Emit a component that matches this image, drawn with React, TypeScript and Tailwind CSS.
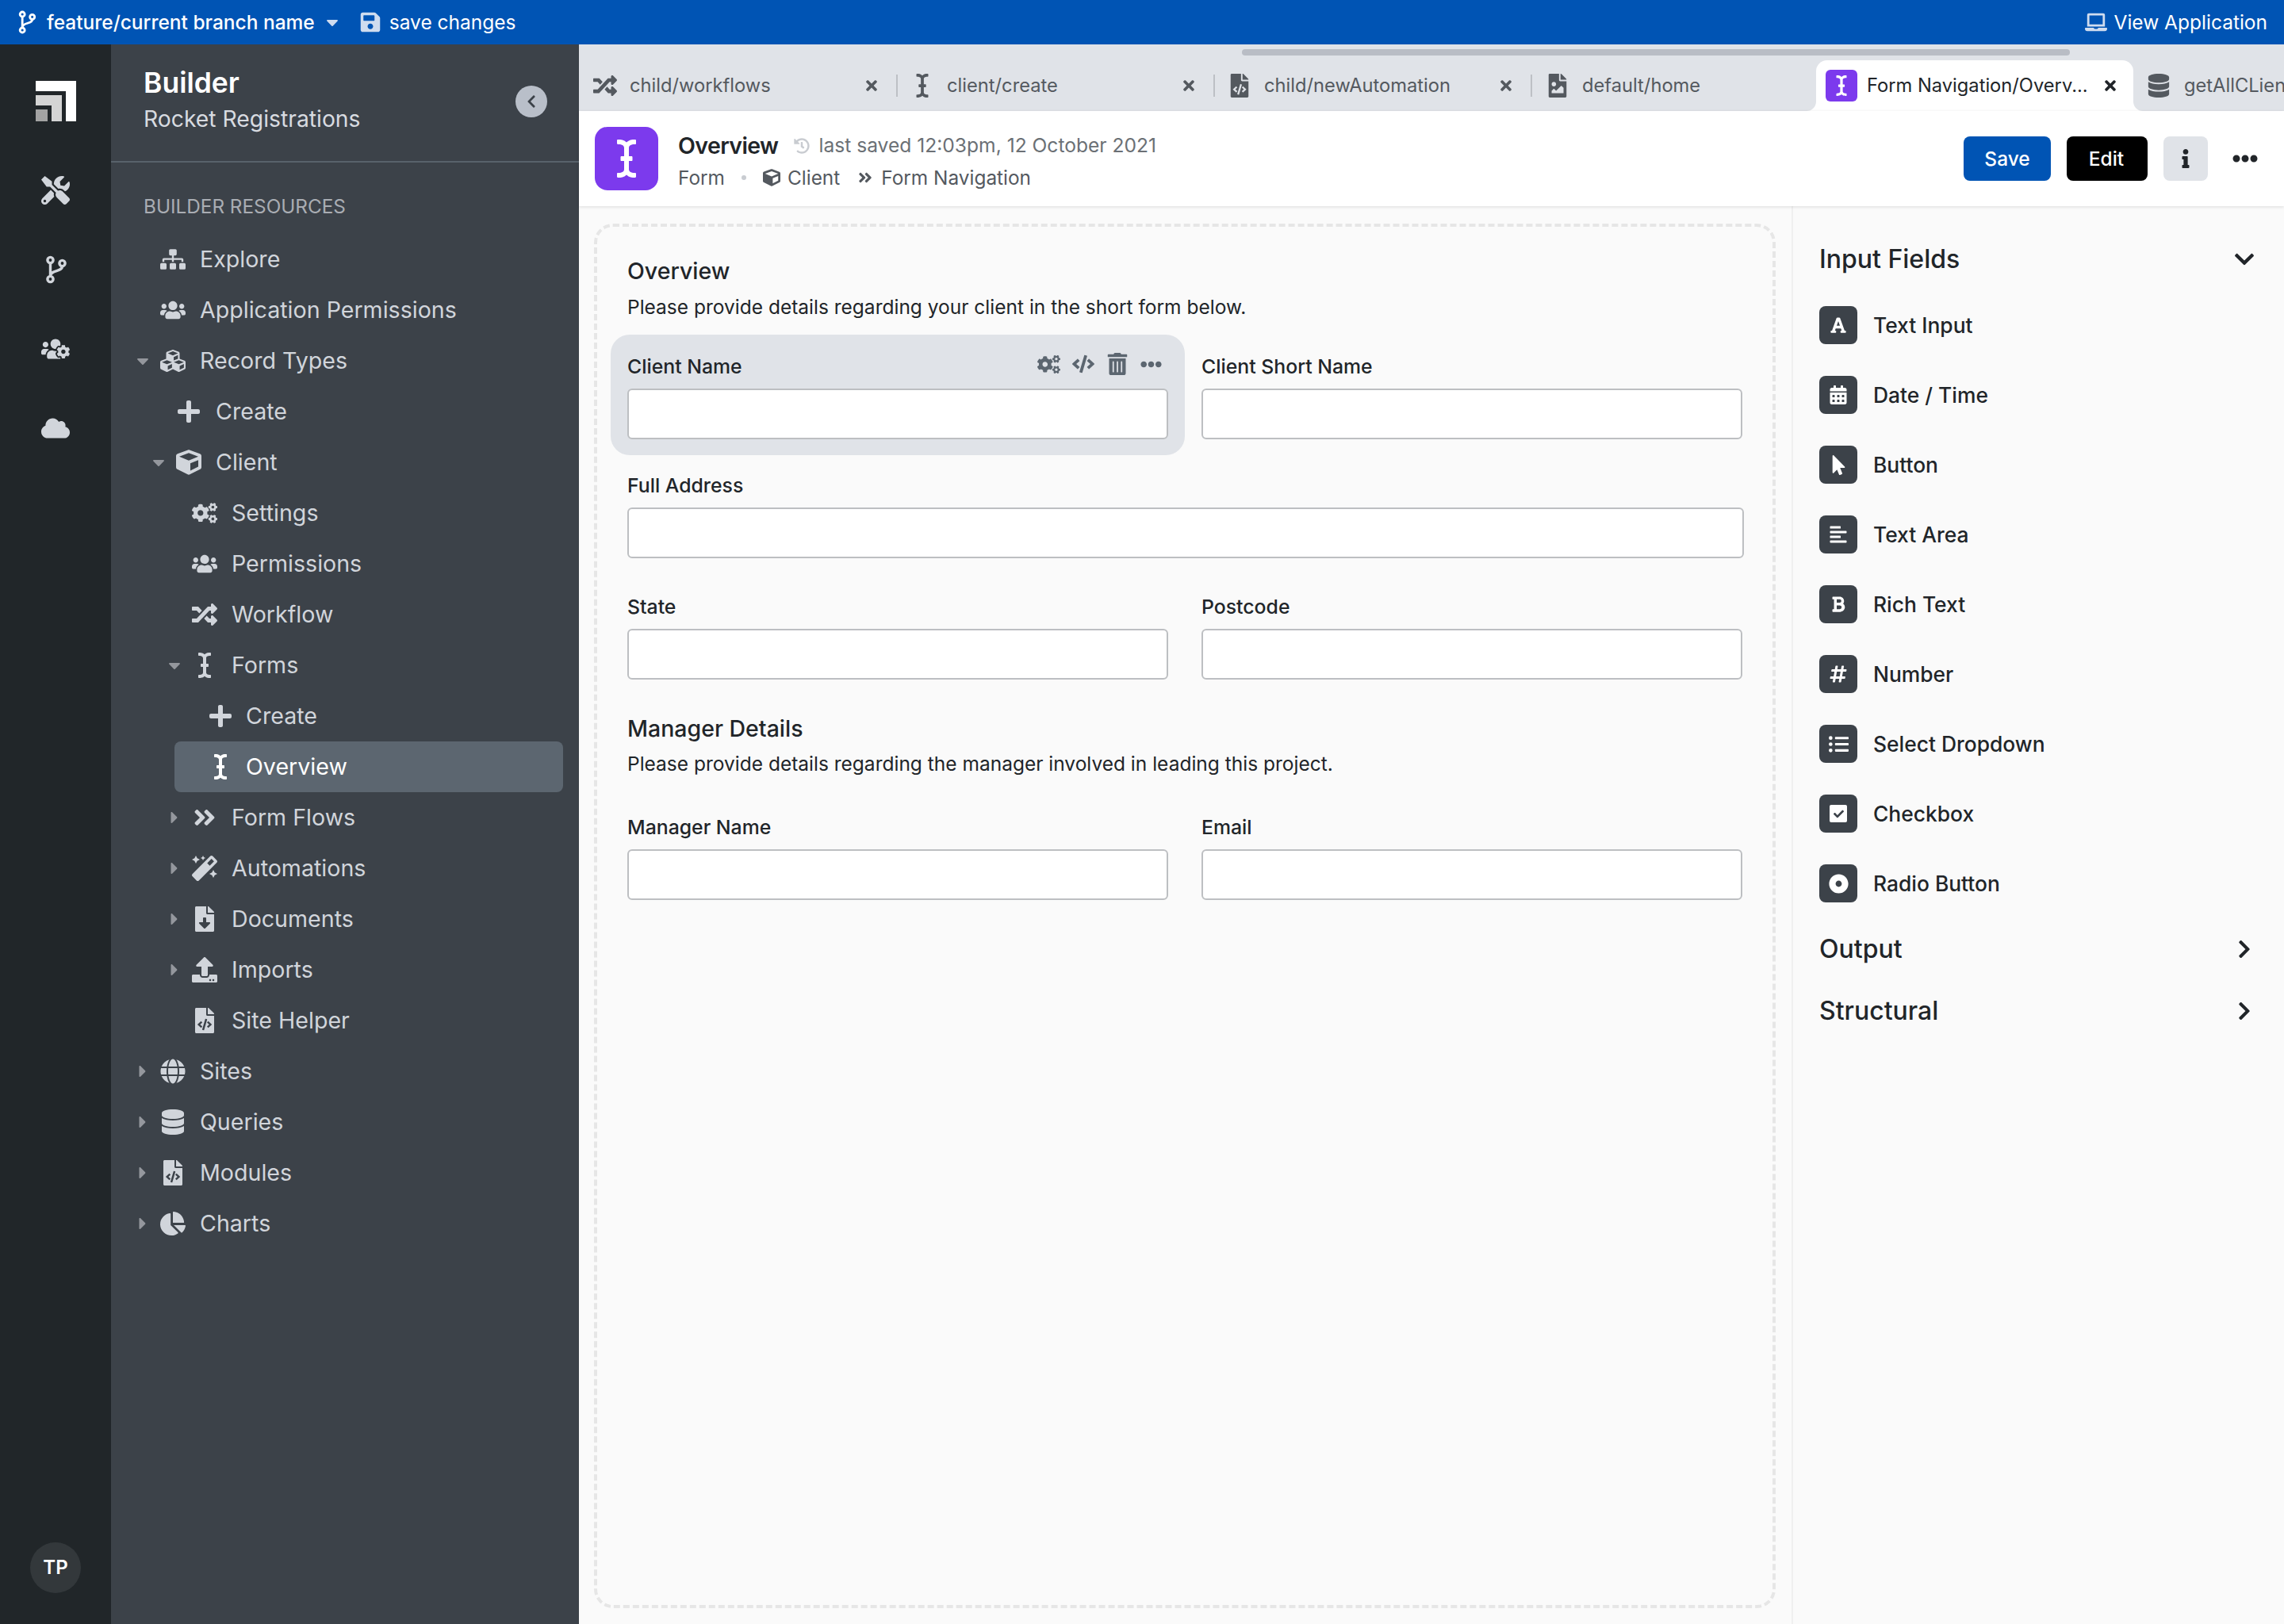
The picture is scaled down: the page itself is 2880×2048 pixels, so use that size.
import type { ComponentType, ReactNode } from 'react';
import {
  FaAlignLeft,
  FaAngleDoubleRight,
  FaBold,
  FaCalendarAlt,
  FaCaretDown,
  FaCaretRight,
  FaChartPie,
  FaCheck,
  FaChevronDown,
  FaChevronLeft,
  FaChevronRight,
  FaCloud,
  FaCode,
  FaCogs,
  FaCube,
  FaCubes,
  FaDatabase,
  FaDotCircle,
  FaEllipsisH,
  FaFileCode,
  FaFileDownload,
  FaFileImage,
  FaFont,
  FaGlobe,
  FaHashtag,
  FaHistory,
  FaICursor,
  FaInfo,
  FaLaptop,
  FaListUl,
  FaMagic,
  FaMousePointer,
  FaPlus,
  FaRandom,
  FaSave,
  FaSitemap,
  FaTimes,
  FaTools,
  FaTrashAlt,
  FaUpload,
  FaUsers,
  FaUsersCog,
} from 'react-icons/fa';

type Icon = ComponentType<{ className?: string }>;

interface NavRow {
  label: string;
  icon: Icon;
  level: 0 | 1 | 2 | 3;
  caret?: 'down' | 'right';
  active?: boolean;
}

const navRows: NavRow[] = [
  { label: 'Explore', icon: FaSitemap, level: 0 },
  { label: 'Application Permissions', icon: FaUsers, level: 0 },
  { label: 'Record Types', icon: FaCubes, level: 0, caret: 'down' },
  { label: 'Create', icon: FaPlus, level: 1 },
  { label: 'Client', icon: FaCube, level: 1, caret: 'down' },
  { label: 'Settings', icon: FaCogs, level: 2 },
  { label: 'Permissions', icon: FaUsers, level: 2 },
  { label: 'Workflow', icon: FaRandom, level: 2 },
  { label: 'Forms', icon: FaICursor, level: 2, caret: 'down' },
  { label: 'Create', icon: FaPlus, level: 3 },
  { label: 'Overview', icon: FaICursor, level: 3, active: true },
  { label: 'Form Flows', icon: FaAngleDoubleRight, level: 2, caret: 'right' },
  { label: 'Automations', icon: FaMagic, level: 2, caret: 'right' },
  { label: 'Documents', icon: FaFileDownload, level: 2, caret: 'right' },
  { label: 'Imports', icon: FaUpload, level: 2, caret: 'right' },
  { label: 'Site Helper', icon: FaFileCode, level: 2 },
  { label: 'Sites', icon: FaGlobe, level: 0, caret: 'right' },
  { label: 'Queries', icon: FaDatabase, level: 0, caret: 'right' },
  { label: 'Modules', icon: FaFileCode, level: 0, caret: 'right' },
  { label: 'Charts', icon: FaChartPie, level: 0, caret: 'right' },
];

const levelPadding = ['pl-[30px]', 'pl-[50px]', 'pl-[70px]', 'pl-[90px]'];

const tabs: { label: string; icon: Icon }[] = [
  { label: 'child/workflows', icon: FaRandom },
  { label: 'client/create', icon: FaICursor },
  { label: 'child/newAutomation', icon: FaFileCode },
];

const inputFields: { label: string; icon: Icon; size: string }[] = [
  { label: 'Text Input', icon: FaFont, size: 'text-[22px]' },
  { label: 'Date / Time', icon: FaCalendarAlt, size: 'text-[24px]' },
  { label: 'Button', icon: FaMousePointer, size: 'text-[25px]' },
  { label: 'Text Area', icon: FaAlignLeft, size: 'text-[24px]' },
  { label: 'Rich Text', icon: FaBold, size: 'text-[22px]' },
  { label: 'Number', icon: FaHashtag, size: 'text-[24px]' },
  { label: 'Select Dropdown', icon: FaListUl, size: 'text-[25px]' },
  { label: 'Checkbox', icon: CheckSquare, size: 'text-[22px]' },
  { label: 'Radio Button', icon: FaDotCircle, size: 'text-[25px]' },
];

function CheckSquare({ className }: { className?: string }) {
  return (
    <span className={`flex h-[22px] w-[22px] items-center justify-center rounded-[2px] bg-white ${className ?? ''}`}>
      <FaCheck className="text-[13px] text-[#3c4249]" />
    </span>
  );
}

function BranchIcon({ className }: { className?: string }) {
  return (
    <svg viewBox="0 0 26 36" fill="none" stroke="currentColor" strokeWidth="3.4" className={className}>
      <circle cx="6" cy="6" r="3.6" />
      <circle cx="6" cy="30" r="3.6" />
      <circle cx="21" cy="10" r="3.6" />
      <path d="M6 10v16M21 14c0 7-15 4-15 12" />
    </svg>
  );
}

function Logo() {
  return (
    <svg viewBox="0 0 51 51" className="h-[51px] w-[51px]">
      <path d="M0 0H51V51H38V13H0Z" fill="#ffffff" />
      <path d="M0 18H33V51H20V31H0Z" fill="#d4d4d4" />
      <rect x="0" y="36" width="15" height="15" fill="#a3a3a3" />
    </svg>
  );
}

function Rail() {
  return (
    <aside className="flex w-[140px] shrink-0 flex-col items-center bg-[#212629] text-[#d1d5db]">
      <div className="mt-[46px]">
        <Logo />
      </div>
      <div className="mt-[37px] flex flex-col items-center">
        <div className="flex h-[100px] items-center justify-center">
          <FaTools className="text-[36px]" />
        </div>
        <div className="flex h-[100px] items-center justify-center">
          <BranchIcon className="h-[36px] w-[27px]" />
        </div>
        <div className="flex h-[100px] items-center justify-center">
          <FaUsersCog className="text-[36px]" />
        </div>
        <div className="flex h-[100px] items-center justify-center">
          <FaCloud className="text-[36px]" />
        </div>
      </div>
      <div className="mt-auto mb-[39px] flex h-[64px] w-[64px] items-center justify-center rounded-full bg-[#33383b] text-[24px] font-semibold text-white">
        TP
      </div>
    </aside>
  );
}

function NavItem({ row }: { row: NavRow }) {
  const Glyph = row.icon;
  return (
    <div
      className={`flex h-[64px] items-center text-[28.6px] ${
        row.active
          ? 'ml-[80px] w-[490px] rounded-[8px] bg-[#5c6670] pl-[10px] text-white'
          : `${levelPadding[row.level]} text-[#d1d5db]`
      }`}
    >
      <span className="flex w-[20px] shrink-0 items-center justify-center text-[#94979d]">
        {row.caret === 'down' && <FaCaretDown className="text-[24px]" />}
        {row.caret === 'right' && <FaCaretRight className="text-[24px]" />}
      </span>
      <span className="flex w-[56px] shrink-0 items-center justify-center">
        <Glyph className="text-[32px]" />
      </span>
      <span className={row.level === 3 ? 'ml-[4px]' : 'ml-[6px]'}>{row.label}</span>
    </div>
  );
}

function Sidebar() {
  return (
    <aside className="flex w-[590px] shrink-0 flex-col bg-[#3c4249]">
      <div className="flex h-[149px] items-start justify-between border-b-2 border-[#58626b] pr-[40px] pl-[41px]">
        <div>
          <div className="mt-[26px] text-[35.5px] leading-[46px] font-semibold text-white">Builder</div>
          <div className="mt-[2px] text-[28.3px] leading-[40px] text-[#d8dbe0]">Rocket Registrations</div>
        </div>
        <button className="mt-[52px] flex h-[40px] w-[40px] items-center justify-center rounded-full bg-[#b9bfc9]">
          <FaChevronLeft className="text-[18px] text-[#3c4249]" />
        </button>
      </div>
      <div className="mt-[38px] pl-[41px] text-[24.3px] leading-[34px] text-[#a9adb3]">BUILDER RESOURCES</div>
      <nav className="mt-[18px]">
        {navRows.map((row, idx) => (
          <NavItem key={idx} row={row} />
        ))}
      </nav>
    </aside>
  );
}

function TabStrip() {
  return (
    <div className="relative flex h-[84px] shrink-0 items-end overflow-hidden bg-[#e0e3e8] pl-[2px]">
      <div className="absolute top-[6px] left-[836px] h-[8px] w-[1044px] rounded-full bg-[#b9bdc5]" />
      {tabs.map((tab) => {
        const Glyph = tab.icon;
        return (
          <div key={tab.label} className="flex h-[64px] w-[400px] shrink-0 items-center text-[23.7px] text-[#54595f]">
            <span className="flex w-[62px] shrink-0 items-center justify-center text-[30px]">
              <Glyph />
            </span>
            <span className="flex-1 whitespace-nowrap">{tab.label}</span>
            <FaTimes className="mr-[21px] text-[20px]" />
            <span className="h-[28px] w-[2px] bg-[#bdc0c5]" />
          </div>
        );
      })}
      <div className="flex h-[64px] w-[358px] shrink-0 items-center text-[23.7px] text-[#54595f]">
        <span className="flex w-[63px] shrink-0 items-center justify-center text-[30px]">
          <FaFileImage />
        </span>
        <span>default/home</span>
      </div>
      <div className="relative flex h-[64px] w-[400px] shrink-0 items-center rounded-t-[14px] bg-white pl-[12px] text-[23.7px] text-[#212529]">
        {/* flared bottom corners of the active tab */}
        <span className="absolute bottom-0 -left-[12px] h-[12px] w-[12px] rounded-br-[12px] shadow-[6px_6px_0_6px_#ffffff]" />
        <span className="absolute -right-[12px] bottom-0 h-[12px] w-[12px] rounded-bl-[12px] shadow-[-6px_6px_0_6px_#ffffff]" />
        <span className="flex h-[40px] w-[40px] shrink-0 items-center justify-center rounded-[6px] bg-[#7c3aed] text-[26px] text-white">
          <FaICursor />
        </span>
        <span className="ml-[12px] flex-1 whitespace-nowrap">Form Navigation/Overv...</span>
        <FaTimes className="mr-[19px] text-[20px]" />
      </div>
      <div className="flex h-[64px] shrink-0 items-center text-[23.7px] whitespace-nowrap text-[#54595f]">
        <span className="flex w-[64px] shrink-0 items-center justify-center text-[30px]">
          <FaDatabase />
        </span>
        <span>getAllCLients</span>
      </div>
    </div>
  );
}

function PageHeader() {
  return (
    <header className="z-10 flex h-[120px] shrink-0 items-center bg-white pr-[33px] pl-[20px] shadow-[0_1px_4px_rgba(0,0,0,0.12)]">
      <div className="flex h-[80px] w-[80px] shrink-0 items-center justify-center rounded-[16px] bg-[#7c3aed] text-[48px] text-white">
        <FaICursor />
      </div>
      <div className="ml-[25px] pt-[3px]">
        <div className="flex items-center">
          <span className="text-[28.5px] leading-[44px] font-semibold tracking-[-0.6px] text-[#212529]">Overview</span>
          <FaHistory className="ml-[20px] text-[20px] text-[#c9ccd1]" />
          <span className="ml-[11px] text-[24.6px] text-[#6b7075]">last saved 12:03pm, 12 October 2021</span>
        </div>
        <div className="flex items-center text-[24.4px] leading-[36px] text-[#54595f]">
          <span>Form</span>
          <span className="mx-[21px] h-[6px] w-[6px] rounded-full bg-[#c9ccd1]" />
          <FaCube className="text-[22px]" />
          <span className="ml-[9px]">Client</span>
          <FaAngleDoubleRight className="mr-[10px] ml-[22px] text-[20px]" />
          <span>Form Navigation</span>
        </div>
      </div>
      <div className="ml-auto flex items-center">
        <button className="h-[56px] w-[110px] rounded-[8px] bg-[#0054b4] text-[24.5px] font-medium text-white">Save</button>
        <button className="ml-[20px] h-[56px] w-[102px] rounded-[8px] bg-black pr-[2px] text-[24.5px] font-medium text-white">Edit</button>
        <button className="ml-[20px] flex h-[56px] w-[56px] items-center justify-center rounded-[8px] bg-[#e0e3e8] text-[#212529]">
          <FaInfo className="text-[24px]" />
        </button>
        <FaEllipsisH className="ml-[31px] text-[32px] text-[#212529]" />
      </div>
    </header>
  );
}

function Field({ label, children }: { label: string; children?: ReactNode }) {
  return (
    <div>
      <div className="flex h-[54px] items-center justify-between">
        <span className="text-[24.8px] font-medium text-[#212529]">{label}</span>
        {children}
      </div>
      <div className="h-[64px] rounded-[6px] border-2 border-[#bdbfc2] bg-white" />
    </div>
  );
}

function FormCanvas() {
  return (
    <div className="mt-[22px] mr-[20px] mb-[20px] ml-[19px] w-[1490px] shrink-0 rounded-[24px] border-4 border-dashed border-[#e6e6e6] px-[38px] pt-[36px]">
      <h2 className="text-[28.5px] leading-[40px] font-medium text-[#212529]">Overview</h2>
      <p className="mt-[5px] text-[24.5px] leading-[40px] text-[#212529]">
        Please provide details regarding your client in the short form below.
      </p>
      <div className="mt-[15px] grid grid-cols-[682px_682px] gap-x-[42px]">
        {/* selected field block */}
        <div className="-mx-[21px] rounded-[24px] bg-[#e0e3e8] px-[21px] pt-[14px] pb-[20px]">
          <Field label="Client Name">
            <div className="mr-[8px] mb-[8px] flex items-center gap-[15px] text-[#5c6670]">
              <FaCogs className="text-[29px]" />
              <FaCode className="text-[28px]" />
              <FaTrashAlt className="text-[28px]" />
              <FaEllipsisH className="text-[27px]" />
            </div>
          </Field>
        </div>
        <div className="pt-[14px]">
          <Field label="Client Short Name" />
        </div>
      </div>
      <div className="mt-[12px] -mr-[2px]">
        <Field label="Full Address" />
      </div>
      <div className="mt-[35px] grid grid-cols-[682px_682px] gap-x-[42px]">
        <Field label="State" />
        <Field label="Postcode" />
      </div>
      <h2 className="mt-[42px] text-[28.5px] leading-[40px] font-medium text-[#212529]">Manager Details</h2>
      <p className="mt-[4px] text-[24.5px] leading-[40px] text-[#212529]">
        Please provide details regarding the manager involved in leading this project.
      </p>
      <div className="mt-[34px] grid grid-cols-[682px_682px] gap-x-[42px]">
        <Field label="Manager Name" />
        <Field label="Email" />
      </div>
    </div>
  );
}

function PanelHeading({ label, open }: { label: string; open?: boolean }) {
  return (
    <div className="flex h-[78px] items-center justify-between pr-[37px]">
      <span className="text-[32px] font-medium text-[#212529]">{label}</span>
      <span className="flex w-[26px] justify-center text-[#212529]">
        {open ? <FaChevronDown className="text-[28px]" /> : <FaChevronRight className="text-[26px]" />}
      </span>
    </div>
  );
}

function FieldPanel() {
  return (
    <aside className="flex-1 border-l-2 border-[#f0f0f0] pt-[28px] pl-[33px]">
      <PanelHeading label="Input Fields" open />
      <div className="mt-[20px]">
        {inputFields.map((field) => {
          const Glyph = field.icon;
          return (
            <div key={field.label} className="flex h-[88px] items-start">
              <span className={`flex h-[48px] w-[48px] shrink-0 items-center justify-center rounded-[8px] bg-[#3c4249] text-white ${field.size}`}>
                <Glyph />
              </span>
              <span className="ml-[20px] text-[26.4px] leading-[48px] font-medium text-[#212529]">{field.label}</span>
            </div>
          );
        })}
      </div>
      <div className="-mt-[20px]">
        <PanelHeading label="Output" />
        <PanelHeading label="Structural" />
      </div>
    </aside>
  );
}

export default function App() {
  return (
    <div className="flex h-[2048px] w-[2880px] flex-col overflow-hidden bg-[#fafafa] font-[family-name:Inter,sans-serif]">
      <div className="flex h-[56px] shrink-0 items-center justify-between bg-[#0054b4] pr-[21px] pl-[23px] text-[24.5px] text-white">
        <div className="flex items-center">
          <BranchIcon className="h-[30px] w-[22px]" />
          <span className="ml-[14px] font-medium">feature/current branch name</span>
          <FaCaretDown className="ml-[10px] text-[24px] text-[#cfdcef]" />
          <FaSave className="ml-[22px] text-[28px] text-[#cfdcef]" />
          <span className="ml-[10px]">save changes</span>
        </div>
        <div className="flex items-center">
          <FaLaptop className="text-[28px] text-[#cfdcef]" />
          <span className="ml-[9px]">View Application</span>
        </div>
      </div>
      <div className="flex min-h-0 flex-1">
        <Rail />
        <Sidebar />
        <main className="flex min-w-0 flex-1 flex-col">
          <TabStrip />
          <PageHeader />
          <div className="flex min-h-0 flex-1">
            <FormCanvas />
            <FieldPanel />
          </div>
        </main>
      </div>
    </div>
  );
}
